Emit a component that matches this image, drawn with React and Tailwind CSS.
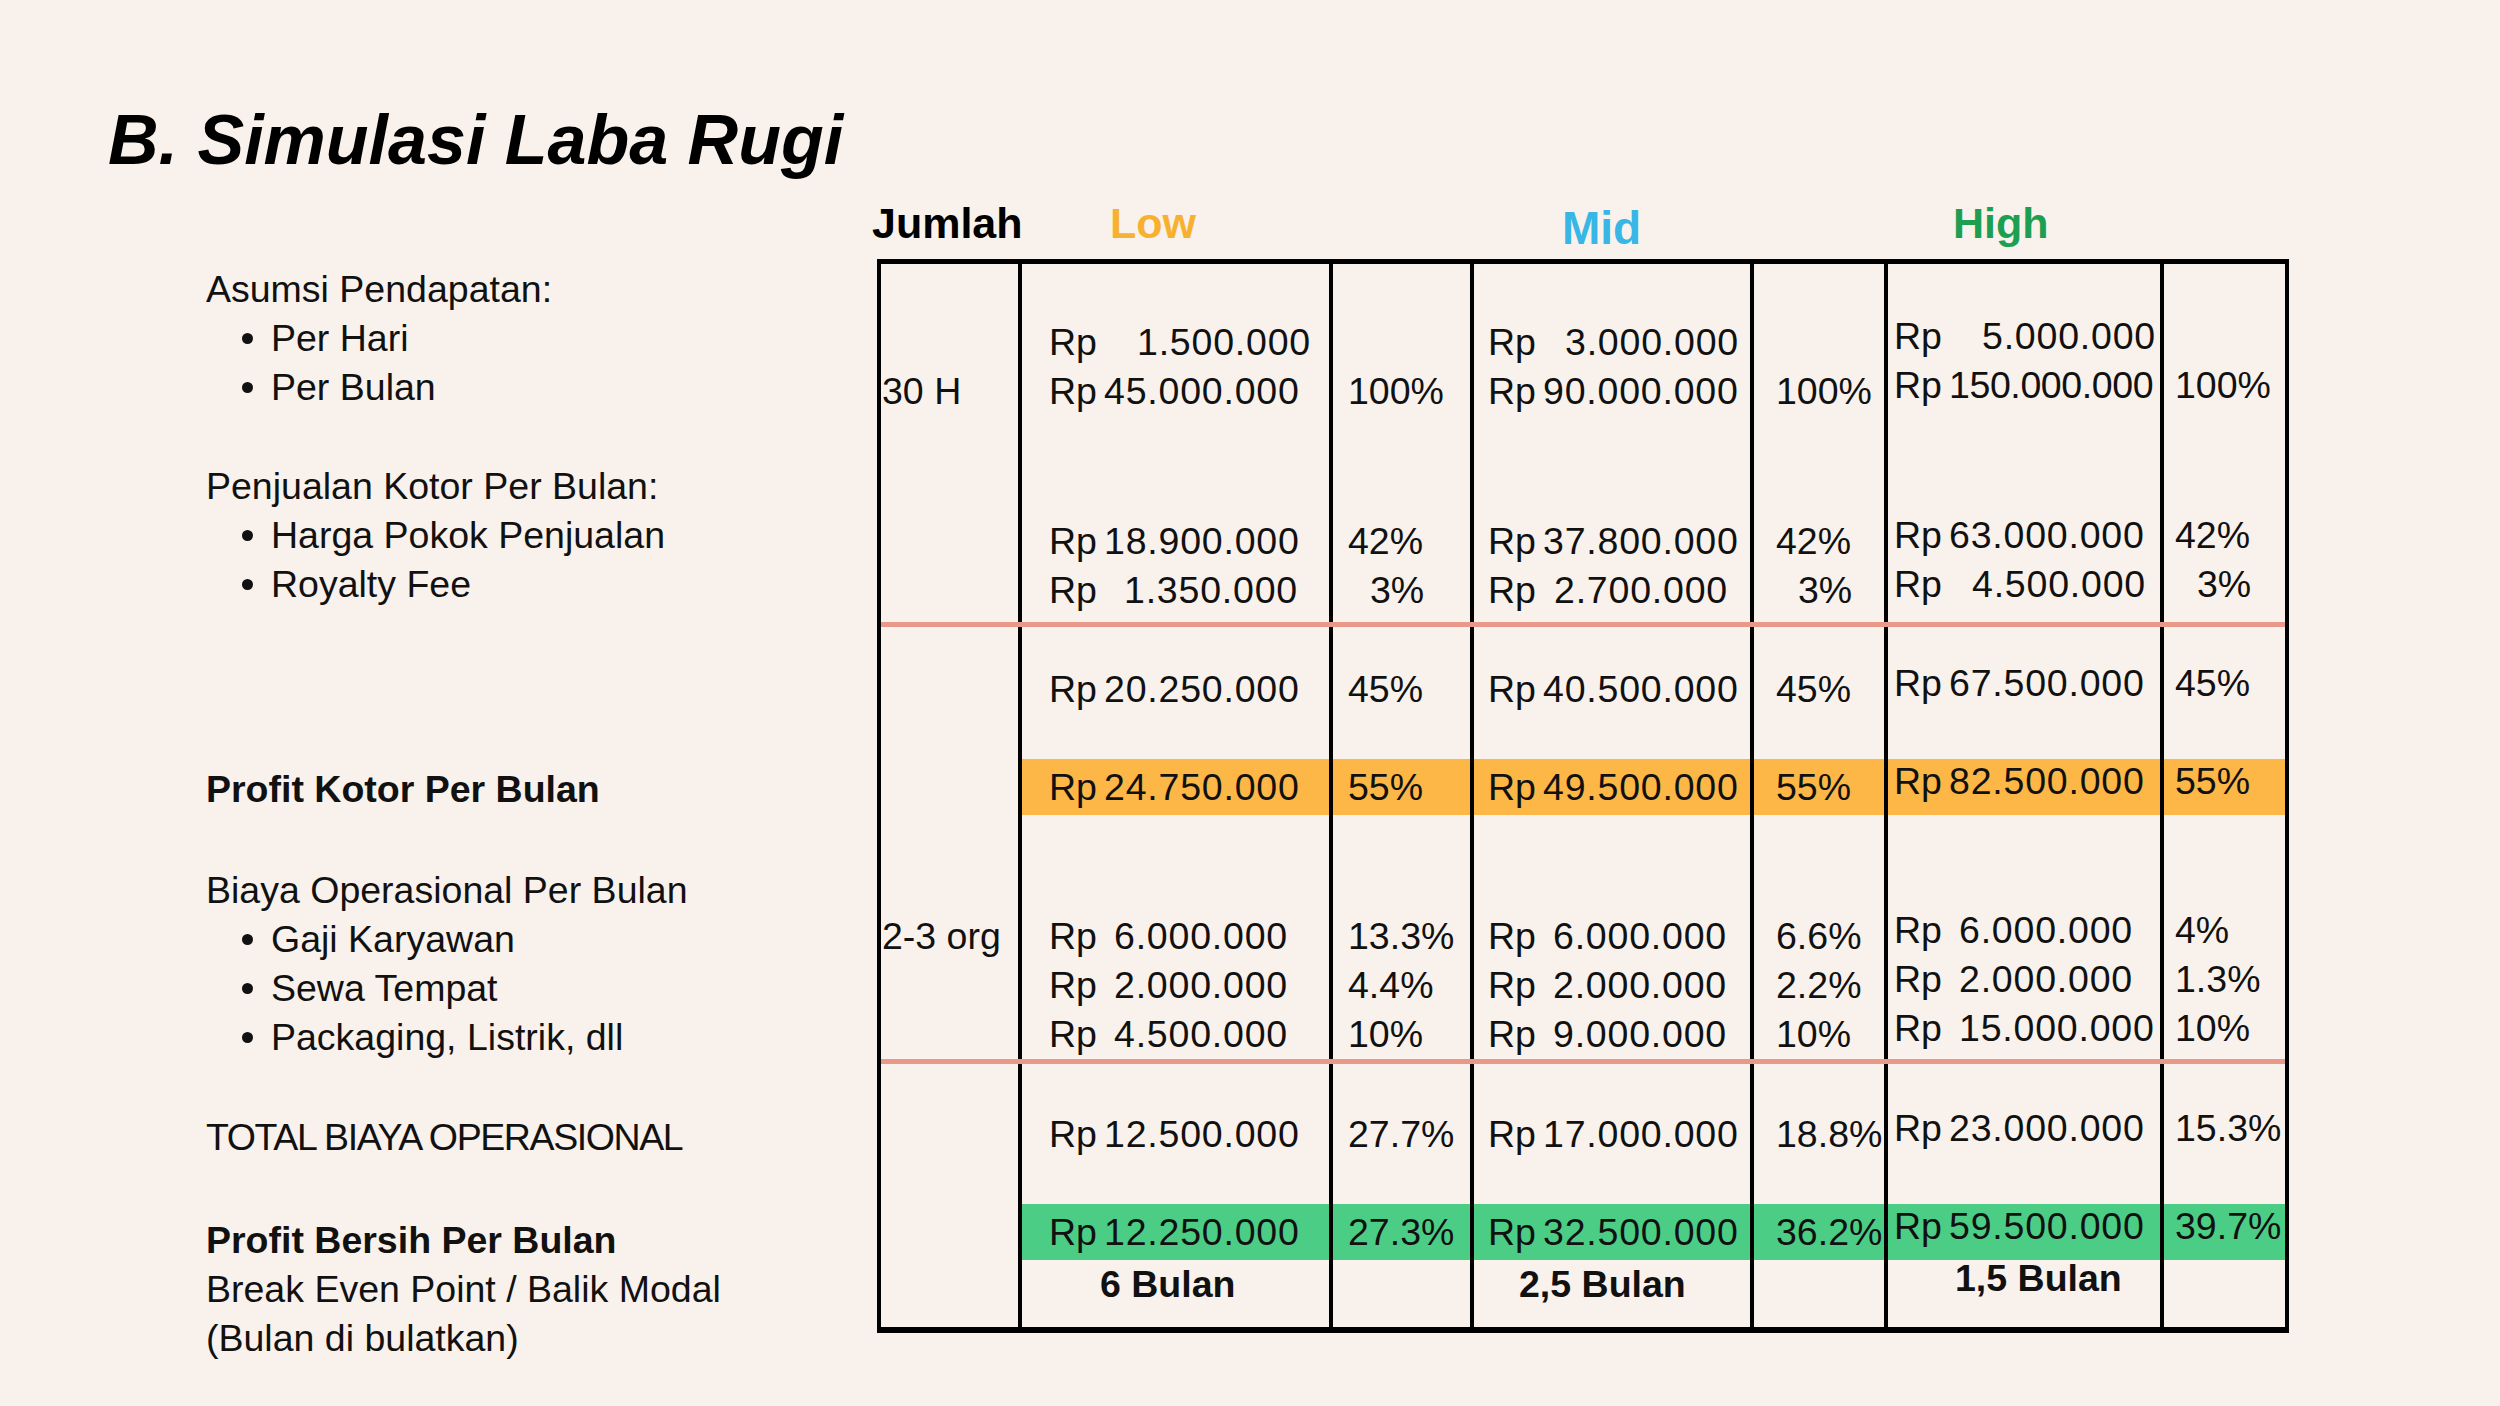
const COLS = 'grid grid-cols-[141px_311px_141px_280px_134px_276px_121px]';
const PAD = ['pl-[1px]', 'pl-[27px]', 'pl-[15px]', 'pl-[14px]', 'pl-[22px]', 'pl-[6px]', 'pl-[11px]'];

// [rp box width, amount]
const SECTION_A = [
  { h: 'h-[54px]' },
  { c: ['', ['w-[88px]', '1.500.000'], '', ['w-[77px]', '3.000.000'], '', ['w-[88px]', '5.000.000'], ''] },
  { c: ['30 H', ['w-[55px]', '45.000.000'], '100%', ['w-[55px]', '90.000.000'], '100%', ['w-[55px]', '150.000.000', 'tracking-[-0.4px]'], '100%'] },
  { h: 'h-[101px]' },
  { c: ['', ['w-[55px]', '18.900.000'], '42%', ['w-[55px]', '37.800.000'], '42%', ['w-[55px]', '63.000.000'], '42%'] },
  {
    c: [
      '',
      ['w-[75px]', '1.350.000'],
      { t: '3%', pad: 'pl-[37px]' },
      ['w-[66px]', '2.700.000'],
      { t: '3%', pad: 'pl-[44px]' },
      ['w-[78px]', '4.500.000'],
      { t: '3%', pad: 'pl-[33px]' },
    ],
  },
  { h: 'h-[7px]' },
];

const SECTION_B = [
  { h: 'h-[38px]' },
  { c: ['', ['w-[55px]', '20.250.000'], '45%', ['w-[55px]', '40.500.000'], '45%', ['w-[55px]', '67.500.000'], '45%'] },
  { h: 'h-[45px]' },
  {
    band: 'bg-[#fcb747]',
    h: 'h-[56px]',
    c: ['', ['w-[55px]', '24.750.000'], '55%', ['w-[55px]', '49.500.000'], '55%', ['w-[55px]', '82.500.000'], '55%'],
  },
  { h: 'h-[97px]' },
  { c: ['2-3 org', ['w-[65px]', '6.000.000'], '13.3%', ['w-[65px]', '6.000.000'], '6.6%', ['w-[65px]', '6.000.000'], '4%'] },
  { c: ['', ['w-[65px]', '2.000.000'], '4.4%', ['w-[65px]', '2.000.000'], '2.2%', ['w-[65px]', '2.000.000'], '1.3%'] },
  { c: ['', ['w-[65px]', '4.500.000'], '10%', ['w-[65px]', '9.000.000'], '10%', ['w-[65px]', '15.000.000'], '10%'] },
];

const SECTION_C = [
  { h: 'h-[46px]' },
  { c: ['', ['w-[55px]', '12.500.000'], '27.7%', ['w-[55px]', '17.000.000'], '18.8%', ['w-[55px]', '23.000.000'], '15.3%'] },
  { h: 'h-[45px]' },
  {
    band: 'bg-[#4ccd86]',
    h: 'h-[56px]',
    c: ['', ['w-[55px]', '12.250.000'], '27.3%', ['w-[55px]', '32.500.000'], '36.2%', ['w-[55px]', '59.500.000'], '39.7%'],
  },
  {
    h: 'h-[46px]',
    c: [
      '',
      { t: '6 Bulan', pad: 'pl-[78px]', b: true },
      '',
      { t: '2,5 Bulan', pad: 'pl-[45px]', b: true },
      '',
      { t: '1,5 Bulan', pad: 'pl-[67px]', b: true },
      '',
    ],
  },
  { h: 'h-[21px]' },
];

function Cell({ i, band, pad, children }) {
  return (
    <div
      className={`flex items-center whitespace-nowrap ${i < 6 ? 'border-r-4 border-black' : ''} ${
        band && i > 0 ? band : ''
      } ${pad ?? PAD[i]}`}
    >
      {children}
    </div>
  );
}

function content(c, i) {
  const shift = i >= 5 ? '-translate-y-[6px]' : '';
  if (Array.isArray(c)) {
    return (
      <span className={`flex ${shift}`}>
        <span className={c[0]}>Rp</span>
        <span className={c[2] ?? 'tracking-[0.8px]'}>{c[1]}</span>
      </span>
    );
  }
  if (c && typeof c === 'object') {
    return <span className={`${c.b ? 'font-bold' : ''} ${shift}`}>{c.t}</span>;
  }
  return <span className={shift}>{c}</span>;
}

function Row({ row }) {
  const cells = row.c ?? ['', '', '', '', '', '', ''];
  return (
    <div className={`${COLS} ${row.h ?? 'h-[49px]'}`}>
      {cells.map((c, i) => (
        <Cell key={i} i={i} band={row.band} pad={c && typeof c === 'object' && !Array.isArray(c) ? c.pad : undefined}>
          {content(c, i)}
        </Cell>
      ))}
    </div>
  );
}

function Bullet({ children }) {
  return (
    <div className="flex items-center pl-[36px]">
      <span className="w-[11px] h-[11px] rounded-full bg-[#111] mr-[18px]" />
      {children}
    </div>
  );
}

export default function App() {
  return (
    <div className="w-[2500px] h-[1406px] bg-[#f9f2ec] text-[#111] font-['Liberation_Sans',Arial,sans-serif] pt-[105px] overflow-hidden">
      <h1 className="ml-[108px] h-[70px] text-[70px] leading-[70px] font-bold italic text-black">
        B. Simulasi Laba Rugi
      </h1>

      <div className="flex">
        {/* left labels */}
        <div className="ml-[206px] w-[671px] mt-[90px] flex flex-col text-[37.5px] leading-[49px]">
          <div>Asumsi Pendapatan:</div>
          <Bullet>Per Hari</Bullet>
          <Bullet>Per Bulan</Bullet>
          <div className="mt-[50px]">Penjualan Kotor Per Bulan:</div>
          <Bullet>Harga Pokok Penjualan</Bullet>
          <Bullet>Royalty Fee</Bullet>
          <div className="mt-[156px] font-bold">Profit Kotor Per Bulan</div>
          <div className="mt-[52px]">Biaya Operasional Per Bulan</div>
          <Bullet>Gaji Karyawan</Bullet>
          <Bullet>Sewa Tempat</Bullet>
          <Bullet>Packaging, Listrik, dll</Bullet>
          <div className="mt-[51px] tracking-[-1.4px]">TOTAL BIAYA OPERASIONAL</div>
          <div className="mt-[54px] font-bold">Profit Bersih Per Bulan</div>
          <div>Break Even Point / Balik Modal</div>
          <div>(Bulan di bulatkan)</div>
        </div>

        {/* table */}
        <div className="mt-[23px] w-[1412px]">
          <div className="flex items-center h-[50px] font-bold text-[43px] leading-[50px] -ml-[5px]">
            <span className="w-[238px] text-black">Jumlah</span>
            <span className="w-[452px] text-[#f7b12f]">Low</span>
            <span className="w-[391px] text-[#38b6e5] text-[46px] pt-[10px]">Mid</span>
            <span className="text-[#1c9f51]">High</span>
          </div>

          <div className="mt-[11px] border-t-[5px] border-l-4 border-r-4 border-b-[6px] border-black text-[37.5px] leading-[49px]">
            {SECTION_A.map((r, k) => (
              <Row key={k} row={r} />
            ))}
            <div className="h-[5px] bg-[#e8998a]" />
            {SECTION_B.map((r, k) => (
              <Row key={k} row={r} />
            ))}
            <div className="h-[5px] bg-[#e8998a]" />
            {SECTION_C.map((r, k) => (
              <Row key={k} row={r} />
            ))}
          </div>
        </div>
      </div>
    </div>
  );
}
